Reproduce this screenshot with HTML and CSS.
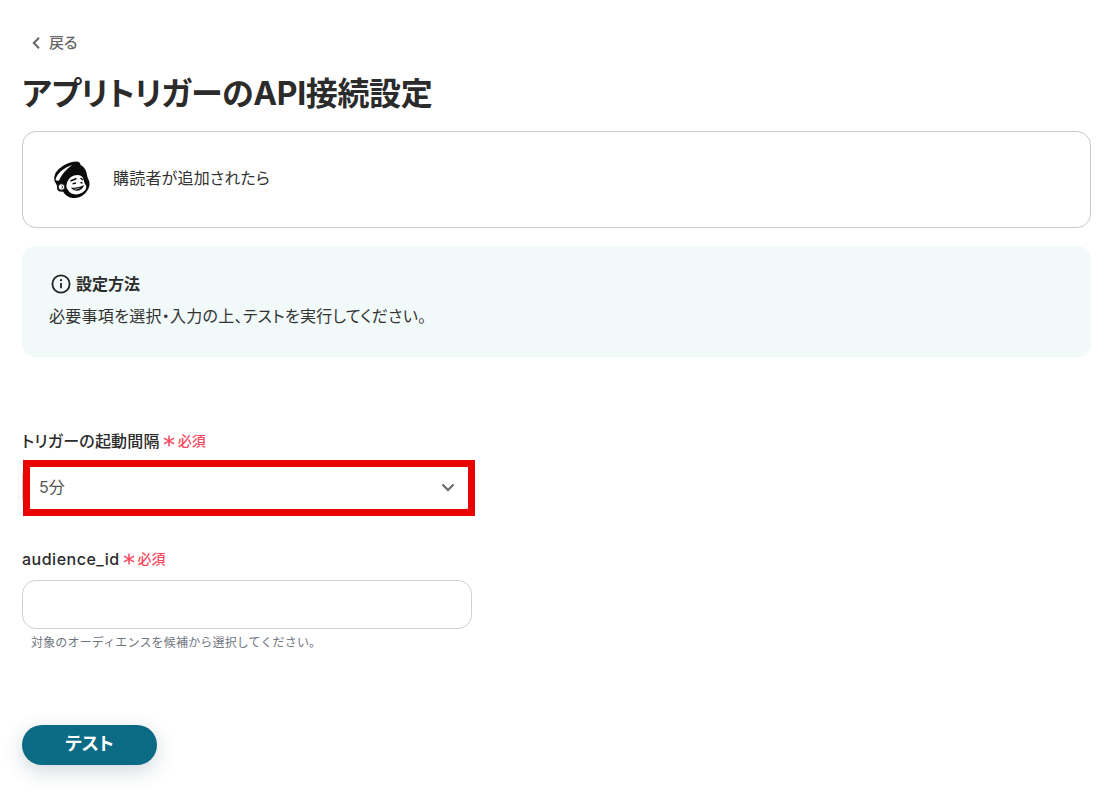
FILE: index.html
```html
<!DOCTYPE html>
<html lang="ja">
<head>
<meta charset="utf-8">
<title>アプリトリガーのAPI接続設定</title>
<link rel="stylesheet" href="styles.css">
</head>
<body>
<main class="page">
  <a class="back">
    <svg class="back-icon" viewBox="0 0 12 12" width="12" height="12"><path d="M9 .8 3.800 6 9 11.200" fill="none" stroke="#666" stroke-width="2"/></svg>
    <span>戻る</span>
  </a>
  <h1 class="title">アプリトリガーのAPI接続設定</h1>
  <section class="app-card">
    <svg class="logo" viewBox="0 0 40 40" width="40" height="40">
      <path d="M3 22C1 17 3 12 8 8c5-4 11-6.500 16-6.500 3 0 4.500 1.500 4.500 3.500 4 2 6 6 6.500 10 .3 3 2 4.500 2.500 7.500.5 4-1.500 8-4.500 11-3.500 3.500-8 5-12.500 4.500-4.500-.6-7.500-3-9.500-6.500C7 32.500 4.500 30 5 27c.2-2-1-3-2-5z" fill="#0b0b0b"/>
      <path d="M3.500 19.500C5 14 11 8 20 5c-6 4.500-10.500 9.500-13 15.500-1 .7-3 .2-3.500-1z" fill="#fff"/>
      <circle cx="9.500" cy="27" r="3.200" fill="#fff" stroke="#0b0b0b" stroke-width=".8"/>
      <path d="M9.800 25.500c1 1 1 2.500-.3 3.200" stroke="#0b0b0b" stroke-width=".9" fill="none"/>
      <path d="M14.500 25c.5-4 3-8 7.500-9.500 3.500-1.200 7.500-.8 9 2.500 1 2.500 1 5 3 7.500 1.200 2.500-1.500 7-7 8.500-5 1.200-9.500-.5-11-4-1.200-1-1.800-3-1.500-5z" fill="#fff"/>
      <path d="M18.500 21l6-2.500M28.500 18l2.500 2" stroke="#0b0b0b" stroke-width="1.500" fill="none"/>
      <path d="M20.500 23.800l3.500-.8M28.500 22.500l2 .5" stroke="#0b0b0b" stroke-width="1.300" fill="none"/>
      <path d="M19 27.500c3.500.6 8.500 0 13-2.500-.5 3-3.500 5.500-6.500 5.800-3 .2-5.500-1.300-6.500-3.300z" fill="#0b0b0b"/>
      <path d="M21.500 28.800c2.500.2 5-.2 7-1.300-1 1.500-5 2.700-7 1.300z" fill="#fff"/>
    </svg>
    <span class="app-text">購読者が追加されたら</span>
  </section>
  <section class="info">
    <div class="info-head">
      <svg viewBox="0 0 20 20" width="20" height="20"><circle cx="10" cy="10" r="8.600" fill="none" stroke="#222" stroke-width="1.800"/><path d="M10 9v5.200" stroke="#222" stroke-width="1.800"/><circle cx="10" cy="6.200" r="1.100" fill="#222"/></svg>
      <span>設定方法</span>
    </div>
    <p class="info-text">必要事項を選択・入力の上、テストを実行してください。</p>
  </section>
  <div class="field first">
    <label class="label label-ja">トリガーの起動間隔<span class="req"><svg class="star" viewBox="0 0 12 12" width="12" height="12"><path d="M6 .5v11M1 3.200l10 5.600M11 3.200 1 8.800" stroke="#f8485e" stroke-width="1.500"/></svg>必須</span></label>
    <div class="select-wrap">
      <div class="select">
        <span class="select-value">5分</span>
        <svg viewBox="0 0 14 10" width="14" height="10"><path d="M1.500 2.500 7 8 12.500 2.500" fill="none" stroke="#6b6b6b" stroke-width="2.200"/></svg>
      </div>
      <div class="highlight"></div>
    </div>
  </div>
  <div class="field second">
    <label class="label">audience_id<span class="req"><svg class="star" viewBox="0 0 12 12" width="12" height="12"><path d="M6 .5v11M1 3.200l10 5.600M11 3.200 1 8.800" stroke="#f8485e" stroke-width="1.500"/></svg>必須</span></label>
    <div class="input"></div>
    <p class="hint">対象のオーディエンスを候補から選択してください。</p>
  </div>
  <button class="test" type="button">テスト</button>
</main>
</body>
</html>
```
FILE: styles.css
```css
* { box-sizing: border-box; }
html, body { margin: 0; padding: 0; background: #fff; }
body {
  width: 1116px;
  height: 794px;
  overflow: hidden;
  font-family: Inter, "Noto Sans CJK JP", "Noto Sans", sans-serif;
  font-feature-settings: "palt";
  color: #2b2b2b;
}
.page {
  display: flex;
  flex-direction: column;
  padding: 32px 25px 0 22px;
}
.back {
  display: flex;
  align-items: center;
  gap: 7px;
  height: 22px;
  padding-left: 8px;
  font-size: 15px;
  line-height: 22px;
  font-weight: 500;
  color: #666;
}
.title {
  margin: 22px 0 0;
  height: 36px;
  font-size: 32px;
  line-height: 36px;
  font-weight: 700;
  letter-spacing: -0.35px;
  color: #2b2b2b;
}
.app-card {
  margin-top: 19px;
  height: 97px;
  border: 1px solid #c9c9c9;
  border-radius: 14px;
  display: flex;
  align-items: center;
  gap: 21px;
  padding-left: 29px;
}
.app-text { font-size: 16px; line-height: 24px; padding-bottom: 3px; letter-spacing: 0.2px; color: #333; }
.info {
  margin-top: 18px;
  height: 111px;
  background: #f1f9f9;
  border-radius: 14px;
  padding: 27px 27px 0;
}
.info-head {
  display: flex;
  align-items: center;
  gap: 5px;
  padding-left: 2px;
  height: 22px;
  font-size: 16px;
  line-height: 22px;
  font-weight: 700;
  color: #2b2b2b;
}
.info-text {
  margin: 10px 0 0;
  font-size: 16px;
  line-height: 22px;
  letter-spacing: 0.28px;
  color: #333;
}
.field { display: flex; flex-direction: column; width: 450px; }
.first { margin-top: 73px; }
.second { margin-top: 36px; }
.label {
  display: flex;
  align-items: center;
  height: 22px;
  font-size: 16px;
  line-height: 22px;
  font-weight: 500;
  letter-spacing: 0.5px;
  color: #2b2b2b;
}
.label-ja { letter-spacing: 0.2px; }
.req {
  display: flex;
  align-items: center;
  gap: 3px;
  margin-left: 3px;
  font-size: 14px;
  font-weight: 500;
  letter-spacing: 0;
  color: #f8485e;
}
.select-wrap { position: relative; margin-top: 10px; }
.select {
  height: 50px;
  border: 1px solid #ccc;
  border-radius: 14px;
  display: flex;
  align-items: center;
  justify-content: space-between;
  padding: 0 16px;
  font-size: 16px;
  color: #555;
}
.select-value { padding-bottom: 3px; }
.highlight {
  position: absolute;
  left: 1px;
  top: -2px;
  width: 452px;
  height: 56px;
  border: 7px solid #e90505;
}
.input {
  height: 49px;
  margin-top: 10px;
  border: 1px solid #ccd0d6;
  border-radius: 14px;
}
.hint {
  margin: 5px 0 0 9px;
  font-size: 12px;
  line-height: 17px;
  font-feature-settings: normal;
  letter-spacing: 0.17px;
  color: #6f7680;
}
.test {
  align-self: flex-start;
  margin-top: 74px;
  width: 135px;
  height: 40px;
  border: 0;
  border-radius: 20px;
  padding: 0 0 6px;
  background: #0b6a84;
  color: #fff;
  font-family: inherit;
  font-size: 18px;
  font-weight: 700;
  font-feature-settings: "palt";
  box-shadow: 0 6px 20px rgba(30, 60, 80, 0.2);
}
```
